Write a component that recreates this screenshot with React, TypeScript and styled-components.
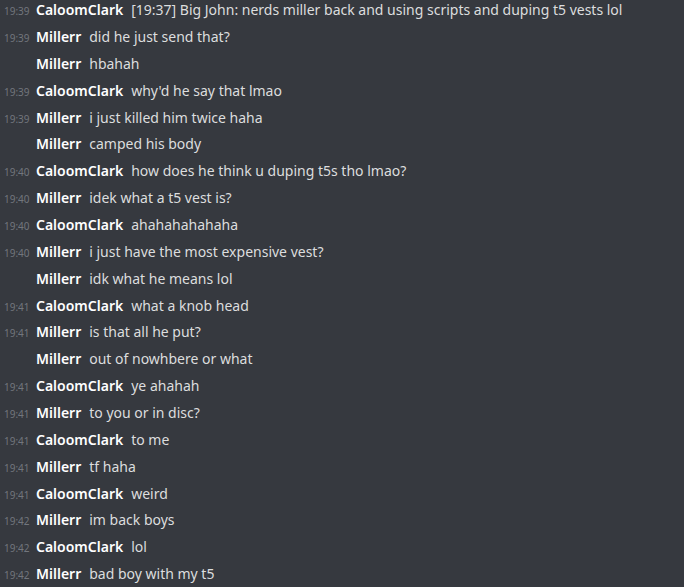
import React from "react";
import styled, { createGlobalStyle } from "styled-components";

// styled-components----------------------------------------------------------------

const GlobalStyle = createGlobalStyle`
  html, body {
    margin: 0;
    padding: 0;
    background: #36393f;
  }
`;

const Wrapper = styled.main`
  height: 587px;
  overflow: hidden;
  display: flex;
  flex-direction: column;
  justify-content: flex-end;
  background: #36393f;
  font-family: "Noto Sans", "Open Sans", sans-serif;
`;

const Row = styled.div`
  display: flex;
  align-items: baseline;
  box-sizing: border-box;
  height: 26.86px;
  padding-top: 2px;
  line-height: 24.86px;
  flex-shrink: 0;
  white-space: nowrap;
`;

const Time = styled.span`
  width: 36px;
  flex-shrink: 0;
  padding-left: 4px;
  box-sizing: border-box;
  font-size: 10px;
  color: #72767d;
`;

const Author = styled.span`
  font-size: 14px;
  font-weight: 600;
  color: #ffffff;
  margin-right: 8px;
`;

const Text = styled.span`
  font-size: 14px;
  color: #dcddde;
`;

// ---------------------------------------------------------------------------------

type MessageType = {
  time?: string;
  author: string;
  text: string;
};

const messages: MessageType[] = [
  { time: "19:39", author: "CaloomClark", text: "[19:37] Big John: nerds miller back and using scripts and duping t5 vests lol" },
  { time: "19:39", author: "Millerr", text: "did he just send that?" },
  { author: "Millerr", text: "hbahah" },
  { time: "19:39", author: "CaloomClark", text: "why'd he say that lmao" },
  { time: "19:39", author: "Millerr", text: "i just killed him twice haha" },
  { author: "Millerr", text: "camped his body" },
  { time: "19:40", author: "CaloomClark", text: "how does he think u duping t5s tho lmao?" },
  { time: "19:40", author: "Millerr", text: "idek what a t5 vest is?" },
  { time: "19:40", author: "CaloomClark", text: "ahahahahahaha" },
  { time: "19:40", author: "Millerr", text: "i just have the most expensive vest?" },
  { author: "Millerr", text: "idk what he means lol" },
  { time: "19:41", author: "CaloomClark", text: "what a knob head" },
  { time: "19:41", author: "Millerr", text: "is that all he put?" },
  { author: "Millerr", text: "out of nowhbere or what" },
  { time: "19:41", author: "CaloomClark", text: "ye ahahah" },
  { time: "19:41", author: "Millerr", text: "to you or in disc?" },
  { time: "19:41", author: "CaloomClark", text: "to me" },
  { time: "19:41", author: "Millerr", text: "tf haha" },
  { time: "19:41", author: "CaloomClark", text: "weird" },
  { time: "19:42", author: "Millerr", text: "im back boys" },
  { time: "19:42", author: "CaloomClark", text: "lol" },
  { time: "19:42", author: "Millerr", text: "bad boy with my t5" },
];

export default function App() {
  return (
    <>
      <GlobalStyle />
      <Wrapper>
        {messages.map((m, i) => (
          <Row key={i}>
            <Time>{m.time}</Time>
            <Author>{m.author}</Author>
            <Text>{m.text}</Text>
          </Row>
        ))}
      </Wrapper>
    </>
  );
}
